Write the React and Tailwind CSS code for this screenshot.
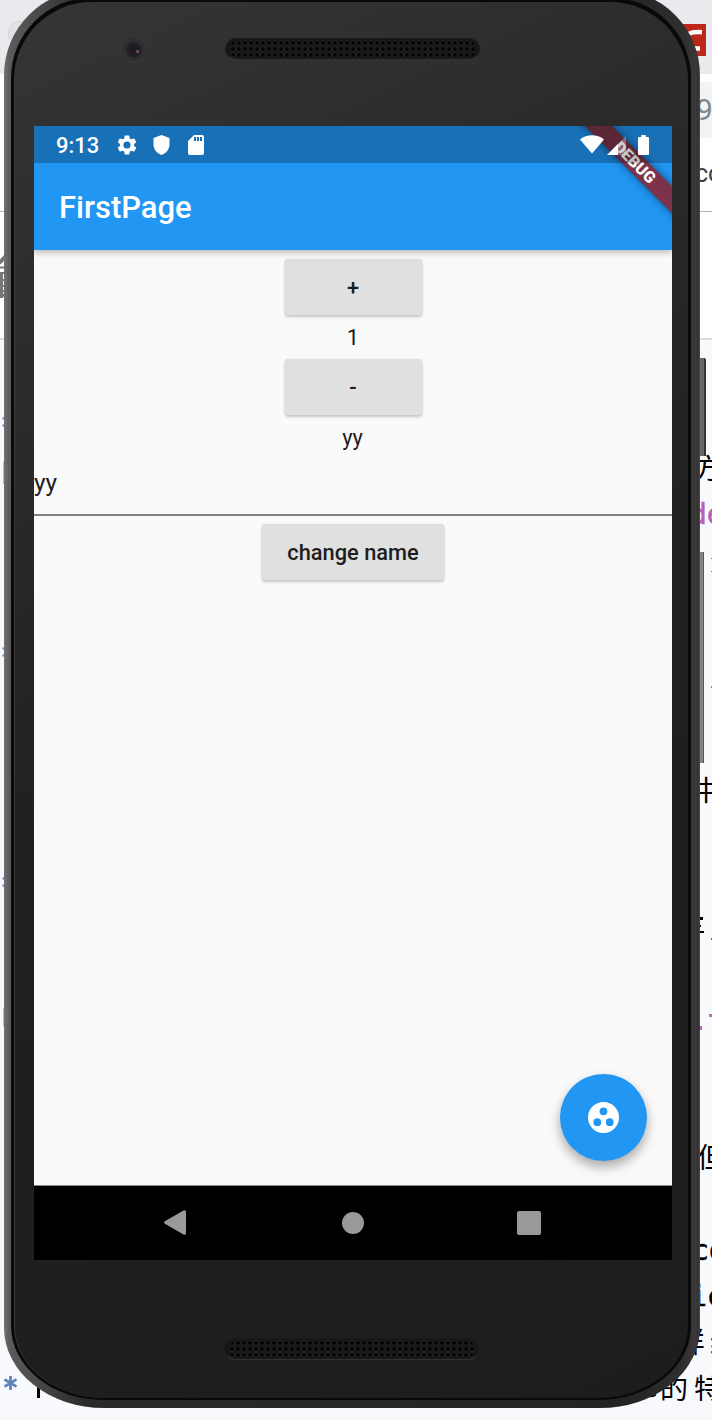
import React from "react";

function Speaker({ className }) {
  return (
    <div className={`flex h-[22px] w-[255px] shrink-0 items-center justify-center rounded-full bg-[#161616] border border-[#1c1c1c] border-b-[#343434] ${className}`}>
      <div className="h-[18px] w-[246px] rounded-full bg-[radial-gradient(circle,#020202_1.4px,#222222_2.2px,#171717_3px)] bg-[length:6px_6px]" />
    </div>
  );
}

function RaisedButton({ children, className }) {
  return (
    <button className={`h-[56px] shrink-0 rounded-[3px] bg-[#e0e0e0] pt-px font-medium text-[21.8px] leading-[56px] text-[#1d1d1d] shadow-[0_2px_3px_rgba(0,0,0,0.2),0_0_2px_rgba(0,0,0,0.1)] ${className}`}>
      {children}
    </button>
  );
}

function Desktop() {
  const cjk = "font-['Noto_Sans_CJK_SC',sans-serif]";
  const mono = "font-['DejaVu_Sans_Mono',monospace] [-webkit-text-stroke:0.5px_currentColor]";
  return (
    <div className="absolute inset-0 overflow-hidden bg-[#f8f9fc]">
      <div className="h-[74px] bg-[#e8eaed]" />
      <div className="h-[137px] bg-white pt-[8px]">
        <div className="ml-auto flex h-[56px] w-[60px] items-center bg-[#f1f3f5] pl-[44px] font-['Roboto',sans-serif] text-[30px] leading-[56px] text-[#80868b]">9</div>
        <div className="ml-auto w-[17px] whitespace-nowrap pt-[20px] font-['Roboto',sans-serif] text-[25px] leading-[32px] text-[#3c4043]">co</div>
      </div>
      <div className="h-px bg-[#b4b4b4]" />
      <div className="h-[126px] bg-white" />
      <div className="h-[2px] bg-[#dcdcde]" />
      <div className="absolute left-[8px] top-[21px] size-[24px] rounded-full border border-[#d0d0d0] bg-[#e2e3e3]" />
      <div className="absolute left-[670px] top-[24px] h-[32px] w-[36px] overflow-hidden bg-[#bd271a]">
        <svg viewBox="0 0 36 32" className="size-full" fill="none" stroke="#fff" strokeWidth="4.5">
          <path d="M32 8.200C23 7.600 16 8.500 14 15s5 9.500 16 9.500" />
        </svg>
      </div>
      <svg className="absolute left-0 top-[253px]" width="8" height="48" viewBox="0 0 8 48" fill="none" stroke="#777">
        <path d="M-1 10L6 3" strokeWidth="4" />
        <path d="M0 14.500h8M0 20h8M0 27h8M0 33h8M0 38h8" strokeWidth="2" />
        <path d="M1.500 20v25M0 44l6-3" strokeWidth="3" />
      </svg>
      {[415, 645, 875].map((y) => (
        <svg key={y} className="absolute left-[2px]" style={{ top: y }} width="4" height="18" viewBox="0 0 4 18" fill="none" stroke="#5b9ed2" strokeWidth="2">
          <path d="M.5 3l3 1.500M.5 11l3-1.500M2 15h2" />
        </svg>
      ))}
      <span className="absolute left-[3px] top-[462px] h-[22px] w-px bg-[#b8bcc0]" />
      <span className="absolute left-[3px] top-[1008px] h-[18px] w-px bg-[#e6aaa0]" />
      <span className={`absolute left-[694px] top-[448px] text-[28px] leading-[38px] text-black ${cjk}`}>方</span>
      <span className={`absolute left-[690px] top-[498px] text-[28px] leading-[34px] text-[#b55fb9] ${mono}`}>de</span>
      <span className="absolute left-[711px] top-[558px] h-[14px] w-px border-y border-[#777]" />
      <span className="absolute left-[711px] top-[686px] h-[2px] w-px bg-[#888]" />
      <span className={`absolute left-[687px] top-[770px] text-[28px] leading-[38px] text-black ${cjk}`}>井</span>
      <span className="absolute left-[699px] top-[917px] h-[3px] w-[4px] bg-black" />
      <span className="absolute left-[699px] top-[925px] h-[2px] w-[2px] bg-black" />
      <span className="absolute left-[699px] top-[931px] h-[2px] w-[5px] bg-black" />
      <span className="absolute left-[711px] top-[938px] h-[2px] w-px bg-[#666]" />
      <span className="absolute left-[709px] top-[1014px] h-[3px] w-[3px] bg-[#bc68bd]" />
      <span className="absolute left-[699px] top-[1026px] h-[4px] w-[3px] bg-[#bc68bd]" />
      <span className={`absolute left-[697px] top-[1137px] text-[28px] leading-[38px] text-black ${cjk}`}>但</span>
      <span className={`absolute left-[692px] top-[1234px] text-[28px] leading-[34px] text-black ${mono}`}>co</span>
      <span className={`absolute left-[690px] top-[1280px] text-[28px] leading-[34px] text-black ${mono}`}>ic</span>
      <span className={`absolute left-[677px] top-[1322px] text-[28px] leading-[38px] text-black ${cjk}`}>样</span>
      <span className={`absolute left-[710px] top-[1322px] text-[28px] leading-[38px] text-black ${cjk}`}>约</span>
      <span className={`absolute left-[641px] top-[1371px] text-[28px] leading-[34px] text-black ${mono}`}>e</span>
      <span className={`absolute left-[660px] top-[1368px] text-[28px] leading-[38px] text-black ${cjk}`}>的</span>
      <span className={`absolute left-[694px] top-[1368px] text-[28px] leading-[38px] text-black ${cjk}`}>特</span>
      <svg className="absolute left-[4px] top-[1376px]" width="13" height="14" viewBox="0 0 13 14" stroke="#5d87ba" strokeWidth="2.800">
        <path d="M6.500 0v14M.5 3.500l12 7M12.500 3.500l-12 7" />
      </svg>
      <span className="absolute left-[37px] top-[1376px] h-[22px] w-[3px] bg-black" />
    </div>
  );
}

function StatusBar() {
  return (
    <div className="relative z-20 flex h-[37px] shrink-0 items-center bg-black/25 pl-[22px] pt-px text-white">
      <span className="w-[60.5px] text-[22px] font-medium leading-[37px]">9:13</span>
      <svg viewBox="1.900 2 20.200 20" className="h-[20px] w-[20px]" fill="currentColor">
        <path d="M19.140 12.940c.04-.3.060-.61.060-.94s-.02-.64-.07-.94l2.030-1.580a.49.49 0 0 0 .12-.61l-1.920-3.320a.488.488 0 0 0-.59-.22l-2.390.96c-.5-.38-1.030-.7-1.620-.94l-.36-2.540A.484.484 0 0 0 13.920 2.400h-3.840c-.24 0-.43.17-.47.41l-.36 2.540c-.59.24-1.130.57-1.620.94l-2.390-.96a.49.49 0 0 0-.59.22L2.740 8.870c-.12.21-.08.47.12.610l2.030 1.580c-.05.3-.09.63-.09.94s.02.64.07.94l-2.030 1.580a.49.49 0 0 0-.12.61l1.920 3.320c.12.22.37.29.59.22l2.390-.96c.5.38 1.030.7 1.620.94l.36 2.540c.05.24.24.41.48.41h3.840c.24 0 .44-.17.47-.41l.36-2.540c.59-.24 1.130-.56 1.620-.94l2.390.96c.22.080.47 0 .59-.22l1.920-3.320a.49.49 0 0 0-.12-.61l-2.010-1.580zM12 15.600a3.600 3.600 0 1 1 0-7.200 3.600 3.600 0 0 1 0 7.200z" />
      </svg>
      <svg viewBox="0 0 17 20" className="ml-[16px] h-[20px] w-[17px]" fill="currentColor">
        <path d="M8.500 0L.5 3v6.500C.5 14 3.800 18.500 8.500 20c4.700-1.500 8-6 8-10.500V3z" />
      </svg>
      <svg viewBox="0 0 16 20" className="ml-[18px] h-[20px] w-[16px]" fill="currentColor" fillRule="evenodd">
        <path d="M6 0h8a2 2 0 0 1 2 2v16a2 2 0 0 1-2 2H2a2 2 0 0 1-2-2V6zM6 2v4h2V2zM9 2v4h2V2zM12 2v4h2V2z" />
      </svg>
      <svg viewBox="0 0 24 19" className="-mt-[2px] ml-auto h-[19px] w-[24px]" fill="currentColor">
        <path d="M0 4.500C7-1.100 17-1.100 24 4.500L12 18.500z" />
      </svg>
      <svg viewBox="0 0 19 19" className="ml-[3px] h-[19px] w-[19px]" fill="currentColor">
        <path d="M0 19H19V0z" opacity="0.3" />
        <path d="M0 19H11V8z" />
      </svg>
      <svg viewBox="0 0 12 20" className="-mt-px ml-[12px] mr-[23px] h-[20px] w-[11px]" preserveAspectRatio="none" fill="currentColor">
        <path d="M3.500 0h5v2H11q1 0 1 1v16q0 1-1 1H1q-1 0-1-1V3q0-1 1-1h2.500z" />
      </svg>
    </div>
  );
}

function Camera() {
  return (
    <div className="ml-[86px] mt-[34px] flex size-[27px] items-center justify-center rounded-full border border-[#3d3939] bg-[#302f30]">
      <div className="flex size-[16px] items-center justify-end rounded-full bg-[radial-gradient(circle,#19181f_0%,#252329_70%,#303034_100%)] pr-[3px] pt-[4px]">
        <span className="size-[3px] rounded-full bg-[#865052]" />
      </div>
    </div>
  );
}

function Screen() {
  return (
    <div className="relative ml-[19px] flex h-[1134px] w-[638px] shrink-0 flex-col overflow-hidden bg-[#fafafa] font-['Roboto',sans-serif] text-[#1d1d1d]">
      <header className="flex h-[124px] shrink-0 flex-col bg-[#2196f3] shadow-[0_2px_7px_rgba(0,0,0,0.3)]">
        <StatusBar />
        <h1 className="pl-[25px] pt-px text-[31px] font-medium leading-[88px] text-white">FirstPage</h1>
      </header>
      <div className="absolute left-[501.250px] top-[27.400px] z-10 h-[18.700px] w-[200px] rotate-45 bg-[#931a1e]/80 text-center text-[16px] font-black leading-[19px] text-white shadow-[0_0_9px_rgba(0,0,0,0.5)]">
        DEBUG
      </div>
      <main className="flex h-[935px] flex-col items-center pt-[9px]">
        <RaisedButton className="w-[137px]">+</RaisedButton>
        <p className="h-[43.5px] text-[21.800px] leading-[45px]">1</p>
        <RaisedButton className="w-[137px]">-</RaisedButton>
        <p className="h-[43.5px] pr-px text-[21.800px] leading-[46px]">yy</p>
        <div className="h-[58px] w-full border-b-2 border-[#828282] text-[24.500px] leading-[50px]">yy</div>
        <RaisedButton className="mt-[8px] w-[182px]">change name</RaisedButton>
      </main>
      <div className="absolute bottom-[99px] right-[25px] flex size-[87px] items-center justify-center rounded-full bg-[#2196f3] shadow-[0_6px_12px_rgba(0,0,0,0.33)]">
        <svg viewBox="0 0 20 20" className="size-[31px]" fill="#fff" fillRule="evenodd">
          <path d="M10 0a10 10 0 1 0 0 20a10 10 0 0 0 0-20zM10 3.500a2.500 2.500 0 1 1 0 5a2.500 2.500 0 0 1 0-5zM6 10.500a2.500 2.500 0 1 1 0 5a2.500 2.500 0 0 1 0-5zM14 10.500a2.500 2.500 0 1 1 0 5a2.500 2.500 0 0 1 0-5z" />
        </svg>
      </div>
      <nav className="flex h-[75px] shrink-0 items-center border-t border-[#888] bg-black pb-px pl-[130px] pr-[131px]">
        <svg viewBox="0 0 22 25" className="h-[25px] w-[22px]" fill="#999">
          <path d="M22 1.500v22q-.6 2-2.500 1L.8 13.700q-1.200-1.200 0-2.400L19.500.5q1.900-1 2.500 1z" />
        </svg>
        <span className="ml-[155.5px] size-[22px] rounded-full bg-[#999]" />
        <span className="ml-auto size-[24px] rounded-[2px] bg-[#999]" />
      </nav>
    </div>
  );
}

export default function App() {
  return (
    <div className="relative h-[1420px] w-[712px] overflow-hidden">
      <Desktop />
      <div className="absolute left-[698px] top-[358px] h-[98px] w-[8px] rounded-tr-[2px] border-r-2 border-[#333] bg-[#686767]" />
      <div className="absolute left-[698px] top-[552px] h-[211px] w-[6px] border-r border-[#555] bg-[#858484]" />
      <div className="absolute left-[4px] top-[-10px] h-[1418px] w-[696px] rounded-t-[85px] rounded-b-[100px_80px] bg-[linear-gradient(90deg,#747272_0px,#5d5b5c_5px,#4e4c4d_30px,#2b2a2a_80px,#242324_620px,#302e2f_680px,#3b3839_692px,#343132_694px,#4a4848_696px)] pb-[8px] pl-[7px] pr-[9px] pt-[8px]">
        <div className="h-full rounded-t-[80px] rounded-b-[92px_74px] bg-[#090909] px-[3px] pb-[2px] pt-[4px]">
          <div className="flex h-full flex-col rounded-t-[78px] rounded-b-[90px_72px] border-l border-[#3b3b3b] bg-[linear-gradient(155deg,#353536_0%,#2d2d2d_18%,#202020_50%,#1d1d1e_100%)]">
            <div className="flex h-[124px] shrink-0 items-start pl-[19px]">
              <Camera />
              <Speaker className="ml-[78px] mt-[36px]" />
            </div>
            <Screen />
            <Speaker className="ml-[209px] mt-[78px]" />
          </div>
        </div>
      </div>
    </div>
  );
}
